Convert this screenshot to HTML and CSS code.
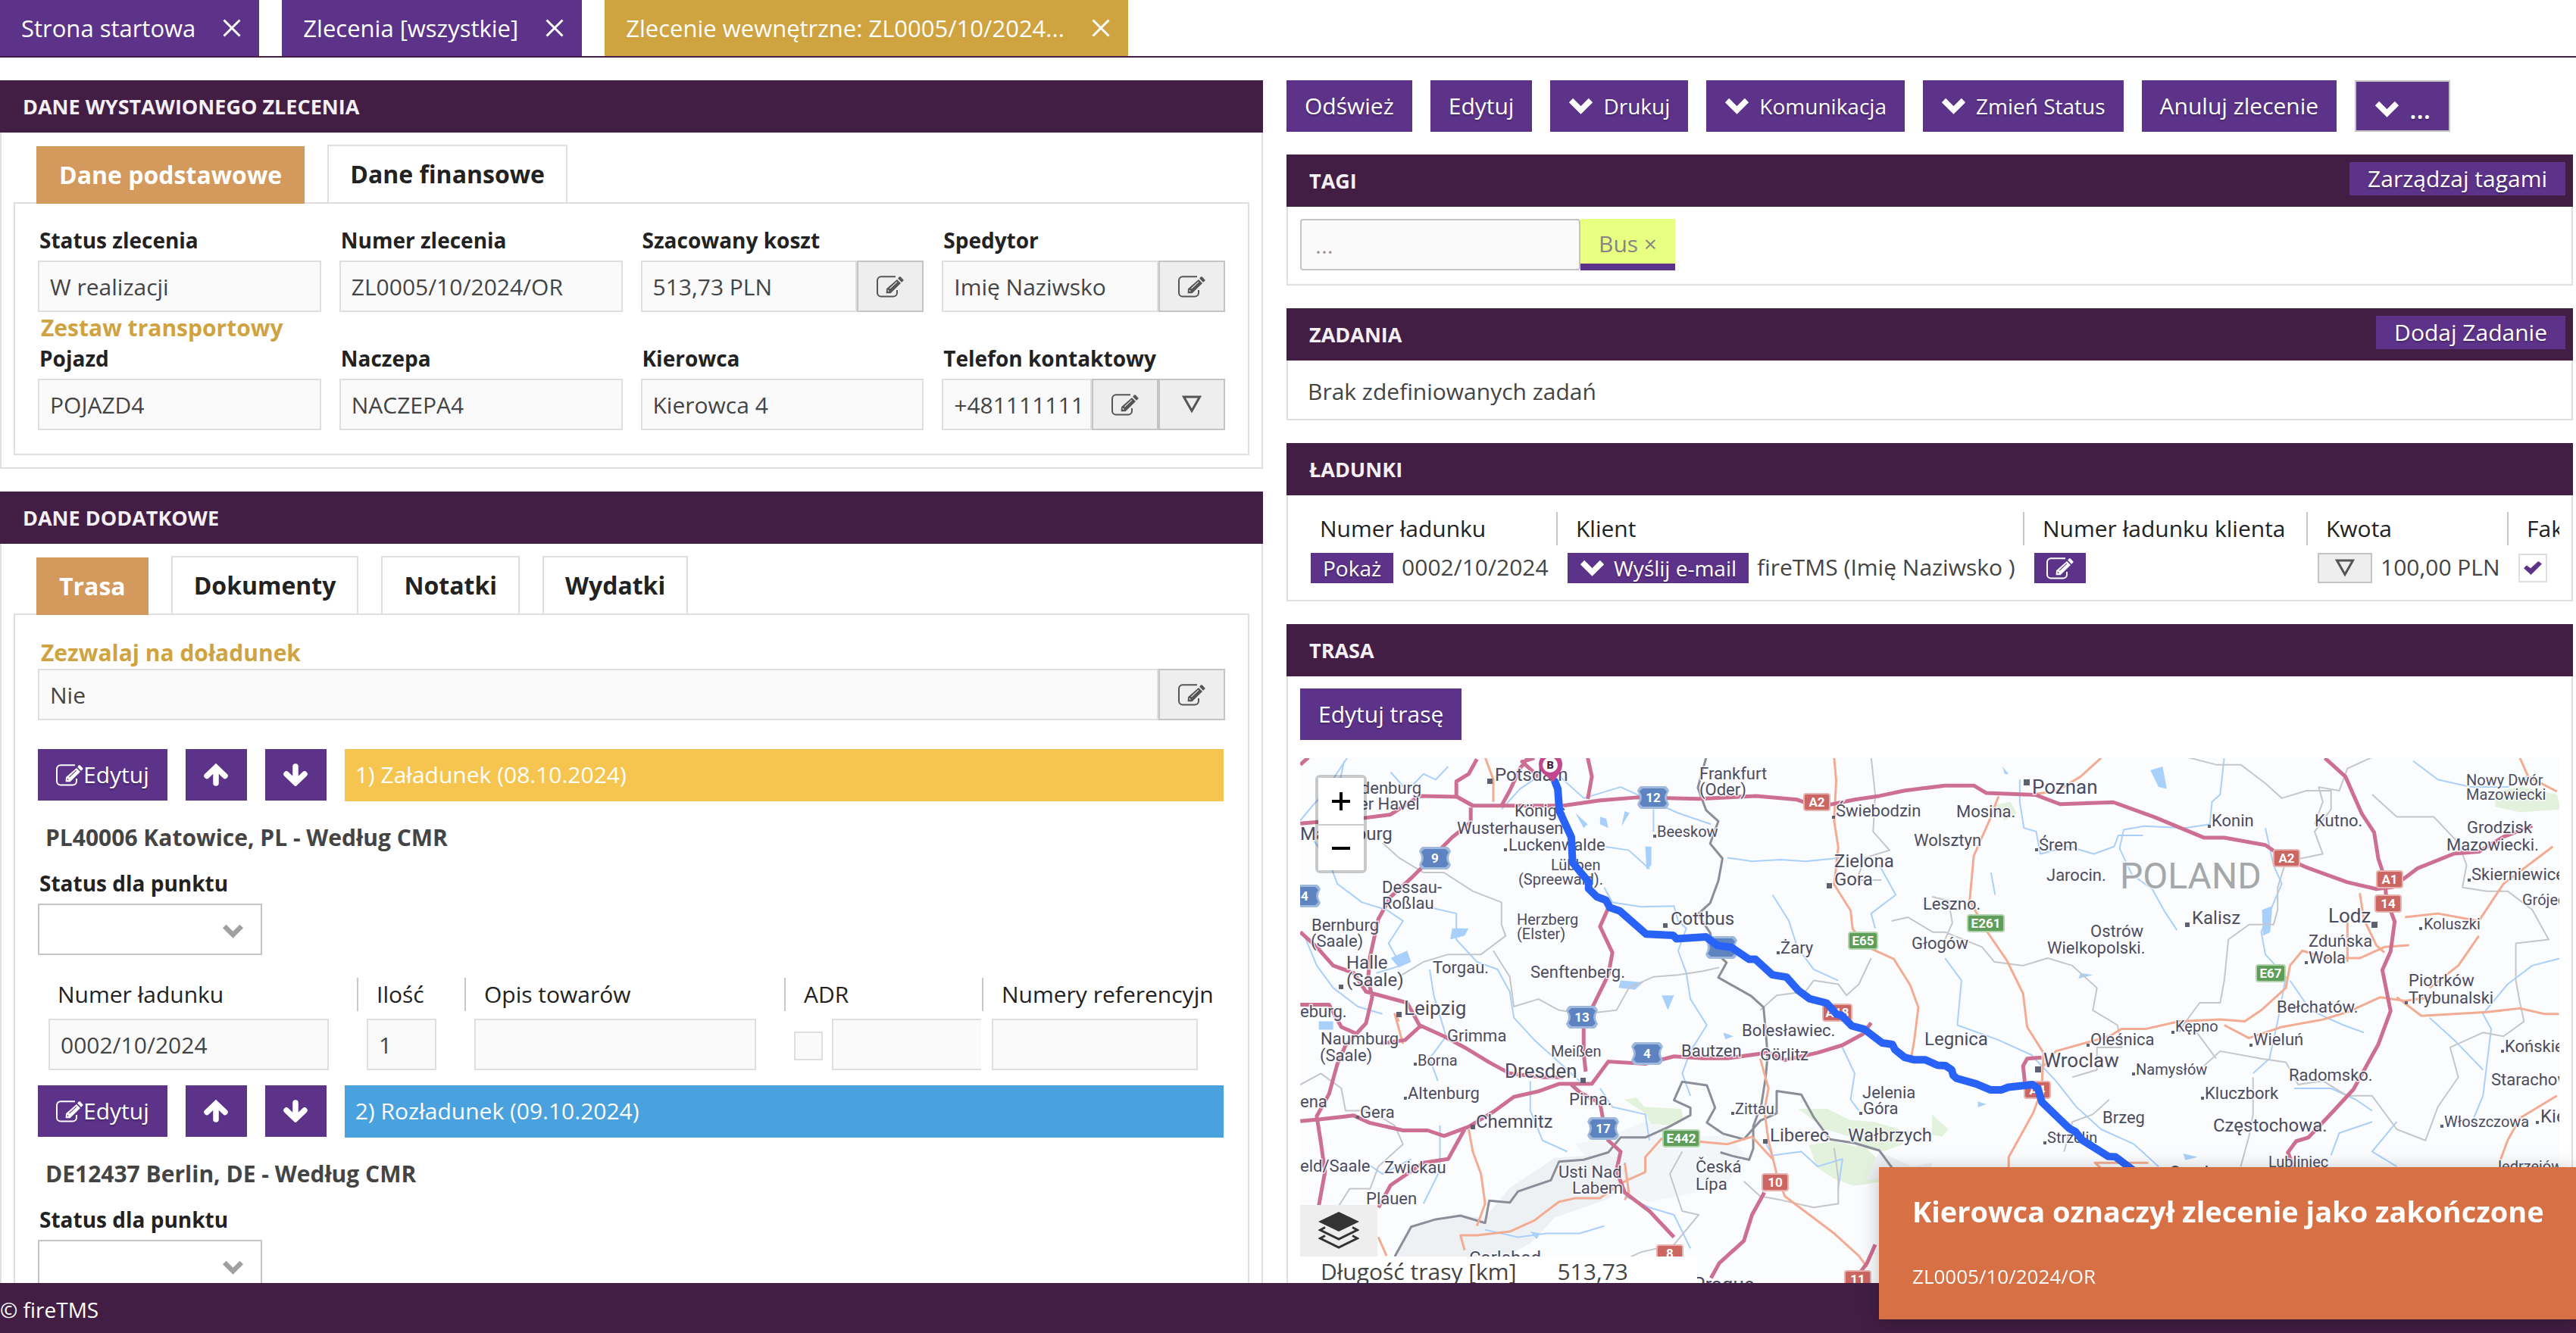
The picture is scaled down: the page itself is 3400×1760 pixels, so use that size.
FILE: index.html
```html
<!DOCTYPE html>
<html lang="pl">
<head>
<meta charset="utf-8">
<meta name="viewport" content="width=device-width, initial-scale=1">
<title>fireTMS</title>
<link rel="stylesheet" href="styles.css">
</head>
<body>
<svg class="sprite" aria-hidden="true">
  <symbol id="i-edit" viewBox="0 0 36 29">
    <path d="M25 1.2H6a5 5 0 0 0-5 5v16.3a5 5 0 0 0 5 5h16a5 5 0 0 0 5-5V19" fill="none" stroke="currentColor" stroke-width="2"/>
    <path fill-rule="evenodd" d="M12.6 23.3l.4-6L27 5l5 4.900-13.500 13.400zM14.600 18.400l1.500 1 .4 1.600-1.600-.3zM17 16.800l9.500-9 .7.700-9.500 9z" fill="currentColor"/>
    <path d="M28.200 3.800l1.600-2.200q1-.9 2 0l3.400 3.600q.7 1-.2 1.900l-2 1.600z" fill="currentColor"/>
  </symbol>
  <symbol id="i-chevron" viewBox="0 0 33 22"><path d="M3.500 3.500l13 13 13-13" fill="none" stroke="currentColor" stroke-width="7.500"/></symbol>
  <symbol id="i-up" viewBox="0 0 32 30"><path d="M16 26V6M4 16.500L16 5l12 11.500" fill="none" stroke="currentColor" stroke-width="7.500" stroke-linecap="round"/></symbol>
  <symbol id="i-down" viewBox="0 0 32 30"><path d="M16 4v20M4 14l12 11.500L28 14" fill="none" stroke="currentColor" stroke-width="7.500" stroke-linecap="round"/></symbol>
  <symbol id="i-tri" viewBox="0 0 26 24"><path d="M2.500 2h21L13 20.500z" fill="none" stroke="currentColor" stroke-width="3"/></symbol>
  <symbol id="i-close" viewBox="0 0 24 24"><path d="M1.500 1.500l21 21M22.500 1.500l-21 21" fill="none" stroke="currentColor" stroke-width="3"/></symbol>
  <symbol id="s-blue" viewBox="0 0 44 32"><path d="M6 1h32q3 1 5 6-3 5-3 9t3 9q-2 5-5 6H6q-3-1-5-6 3-5 3-9T1 7q2-5 5-6z" fill="#9fb9dc"/><path d="M8 4h28l4 4q-3 4-3 8t3 8l-4 4H8l-4-4q3-4 3-8T4 8z" fill="#5d84c0"/></symbol>
</svg>

<nav class="apptabs">
  <a class="apptab" href="#start">Strona startowa <svg><use href="#i-close"/></svg></a>
  <a class="apptab" href="#zlecenia">Zlecenia [wszystkie] <svg><use href="#i-close"/></svg></a>
  <a class="apptab is-active" href="#zlecenie">Zlecenie wewnętrzne: ZL0005/10/2024... <svg><use href="#i-close"/></svg></a>
</nav>

<main class="columns">
  <div class="col">
    <section class="panel">
      <header class="panel-head"><h2>DANE WYSTAWIONEGO ZLECENIA</h2></header>
      <div class="panel-body">
        <div class="tabs">
          <button class="tab is-active">Dane podstawowe</button>
          <button class="tab">Dane finansowe</button>
        </div>
        <div class="tabpane">
          <div class="grid4">
            <div class="fld"><label for="f1">Status zlecenia</label><div class="group"><input id="f1" value="W realizacji"></div></div>
            <div class="fld"><label for="f2">Numer zlecenia</label><div class="group"><input id="f2" value="ZL0005/10/2024/OR"></div></div>
            <div class="fld"><label for="f3">Szacowany koszt</label><div class="group"><input id="f3" value="513,73 PLN"><button class="addon" aria-label="Edytuj"><svg class="edit"><use href="#i-edit"/></svg></button></div></div>
            <div class="fld"><label for="f4">Spedytor</label><div class="group"><input id="f4" value="Imię Naziwsko"><button class="addon" aria-label="Edytuj"><svg class="edit"><use href="#i-edit"/></svg></button></div></div>
          </div>
          <h3 class="subhead">Zestaw transportowy</h3>
          <div class="grid4">
            <div class="fld"><label for="f5">Pojazd</label><div class="group"><input id="f5" value="POJAZD4"></div></div>
            <div class="fld"><label for="f6">Naczepa</label><div class="group"><input id="f6" value="NACZEPA4"></div></div>
            <div class="fld"><label for="f7">Kierowca</label><div class="group"><input id="f7" value="Kierowca 4"></div></div>
            <div class="fld"><label for="f8">Telefon kontaktowy</label><div class="group"><input id="f8" value="+481111111"><button class="addon" aria-label="Edytuj"><svg class="edit"><use href="#i-edit"/></svg></button><button class="addon" aria-label="Więcej"><svg class="tri"><use href="#i-tri"/></svg></button></div></div>
          </div>
        </div>
      </div>
    </section>

    <section class="panel">
      <header class="panel-head"><h2>DANE DODATKOWE</h2></header>
      <div class="panel-body">
        <div class="tabs">
          <button class="tab is-active">Trasa</button>
          <button class="tab">Dokumenty</button>
          <button class="tab">Notatki</button>
          <button class="tab">Wydatki</button>
        </div>
        <div class="tabpane">
          <label class="subhead" for="f9">Zezwalaj na doładunek</label>
          <div class="group"><input id="f9" value="Nie"><button class="addon" aria-label="Edytuj"><svg class="edit"><use href="#i-edit"/></svg></button></div>

          <article class="stop first">
            <div class="stop-bar">
              <button class="btn iconbtn"><svg class="edit"><use href="#i-edit"/></svg>Edytuj</button>
              <button class="btn arrow" aria-label="W górę"><svg><use href="#i-up"/></svg></button>
              <button class="btn arrow" aria-label="W dół"><svg><use href="#i-down"/></svg></button>
              <div class="stop-title load">1) Załadunek (08.10.2024)</div>
            </div>
            <h4>PL40006 Katowice, PL - Według CMR</h4>
            <div class="fld"><label for="s1">Status dla punktu</label>
              <div class="select"><select id="s1"><option></option></select><svg><use href="#i-chevron"/></svg></div></div>
            <table class="cargo">
              <colgroup><col class="c1"><col class="c2"><col class="c3"><col class="c4"><col></colgroup>
              <thead><tr><th>Numer ładunku</th><th>Ilość</th><th>Opis towarów</th><th>ADR</th><th>Numery referencyjn</th></tr></thead>
              <tbody><tr>
                <td><input aria-label="Numer ładunku" value="0002/10/2024"></td>
                <td><input aria-label="Ilość" value="1"></td>
                <td><input aria-label="Opis towarów"></td>
                <td class="adr"><div><input type="checkbox" aria-label="ADR"><input aria-label="Opis ADR"></div></td>
                <td class="last"><input aria-label="Numery referencyjne"></td>
              </tr></tbody>
            </table>
          </article>

          <article class="stop">
            <div class="stop-bar">
              <button class="btn iconbtn"><svg class="edit"><use href="#i-edit"/></svg>Edytuj</button>
              <button class="btn arrow" aria-label="W górę"><svg><use href="#i-up"/></svg></button>
              <button class="btn arrow" aria-label="W dół"><svg><use href="#i-down"/></svg></button>
              <div class="stop-title unload">2) Rozładunek (09.10.2024)</div>
            </div>
            <h4>DE12437 Berlin, DE - Według CMR</h4>
            <div class="fld"><label for="s2">Status dla punktu</label>
              <div class="select"><select id="s2"><option></option></select><svg><use href="#i-chevron"/></svg></div></div>
          </article>
        </div>
      </div>
    </section>
  </div>

  <div class="col right">
    <div class="toolbar">
      <button class="btn">Odśwież</button>
      <button class="btn">Edytuj</button>
      <button class="btn menu"><svg><use href="#i-chevron"/></svg>Drukuj</button>
      <button class="btn menu"><svg><use href="#i-chevron"/></svg>Komunikacja</button>
      <button class="btn menu"><svg><use href="#i-chevron"/></svg>Zmień Status</button>
      <button class="btn">Anuluj zlecenie</button>
      <button class="btn menu more"><svg><use href="#i-chevron"/></svg>...</button>
    </div>

    <section class="panel">
      <header class="panel-head"><h2>TAGI</h2><button class="btn headbtn">Zarządzaj tagami</button></header>
      <div class="panel-body">
        <div class="tags"><input class="taginput" aria-label="Tag" placeholder="..."><button class="tag">Bus ×</button></div>
      </div>
    </section>

    <section class="panel">
      <header class="panel-head"><h2>ZADANIA</h2><button class="btn headbtn">Dodaj Zadanie</button></header>
      <div class="panel-body"><p class="empty">Brak zdefiniowanych zadań</p></div>
    </section>

    <section class="panel">
      <header class="panel-head"><h2>ŁADUNKI</h2></header>
      <div class="panel-body">
        <table class="cargo loads">
          <colgroup><col class="l1"><col class="l2"><col class="l3"><col class="l4"><col></colgroup>
          <thead><tr><th>Numer ładunku</th><th>Klient</th><th>Numer ładunku klienta</th><th>Kwota</th><th>Faktura</th></tr></thead>
          <tbody><tr>
            <td><div class="cell"><button class="btn mini">Pokaż</button>0002/10/2024</div></td>
            <td><div class="cell"><button class="btn mini"><svg class="chev"><use href="#i-chevron"/></svg>Wyślij e-mail</button>fireTMS (Imię Naziwsko )</div></td>
            <td><div class="cell"><button class="btn mini" aria-label="Edytuj"><svg class="edit"><use href="#i-edit"/></svg></button></div></td>
            <td><div class="cell"><button class="btn mini grey" aria-label="Więcej"><svg class="tri"><use href="#i-tri"/></svg></button>100,00 PLN</div></td>
            <td><div class="cell chk"><input type="checkbox" aria-label="Faktura" checked></div></td>
          </tr></tbody>
        </table>
      </div>
    </section>

    <section class="panel route">
      <header class="panel-head"><h2>TRASA</h2></header>
      <div class="panel-body">
        <button class="btn">Edytuj trasę</button>
        <div class="map">
          <svg class="canvas" viewBox="0 0 1662 695" preserveAspectRatio="xMinYMin slice" role="img" aria-label="Mapa trasy">
            <rect width="1662" height="695" fill="#fbfcfe"/>
            <g class="geo" transform="matrix(.542 0 0 .4912 -16 -11)">
              <g fill="#e3f2dc">
                <path d="M1243 965l70 0 55 30 60 5 60 20 10 40-50 20-60-10-20-30-60-20zM1268 1062l60-10 80 20 30 30 30 20-30 40-60 10-50-20-40-30z"/>
                <path d="M818 940l30-5 20 25 90 5 5 30-30 15-50-5-15-30zM2940 112l60-12 90 20 10 40-100 8-60-15zM1568 980l40 40-15 20-25-5zM1710 150l50-10 15 30-30 20z"/>
              </g>
              <g fill="#eef1f3">
                <path d="M260 1362l40-80 120-30 60 5 60-80 110-80 130-10 60 60-60 60-130 50-60 70-60 35zM1440 1080l80 40 48-10 0 40-160 5z"/>
                <path d="M700 1060l80-20 90-40 140 40 60-5 50 60-60 80-180 40-100-40z" opacity=".6"/>
              </g>
              <g class="water">
                <path d="M30 190l30-40 25-30 60-100M125 90l12-60M250 60l40 50 40-45 30 15 30-35M520 160l45-55 60-45M60 240l40 60 20 60 60 50 60 20 40 30-35 60 30 60-60 20M330 420l80 20 0 70 50 60 50 20 30 60 10 70 50 60 60 60 50 50M345 590l10 70 30 110-40 60 20 60M40 500l30 80 40 60 60 50 60 20"/>
                <path d="M660 70l60 60 90-30 60 30 80 40 80 30M770 260l60 10 50 50M770 370l20 40 70 12 80-2 10 40 20 20-20 60 20 60 10 70 40 70-40 70-20 60 20 60M890 160l0 60M1070 290l60 10 70-5 60 5 90-10M1180 390l40 70 20 70 40 60 60 30M1440 310l40 80-60 50 10 40M760 910l30 50 80 20 10 70M300 1100l-70 40-40-30M590 890l0 80 30 80 60 30M370 1010l0 120-40 90M480 1290l80 20 70-10 80 0 60-20M820 1200l60 30 60 20 40 90M1350 800l30 70-10 70 20 30M1160 1050l20 40 70-10 40 40 60-20-10 80"/>
                <path d="M1782 80l0 60 10 70 30 10 10 60 70-20 60 20 50-20 10-30 60 0M2280 20l-10 100-20 20-5 60-60 10-100-5-50 10-10 50 30 70 50 40 30 60 30 50M2380 210l20 100 20 50-50 130 10 60 50 60-20 120-20 100-40 40M2740 30l60 50 80 20 90 0 50-30M3100 560l-70 20-60 50-60 80 20 40-10 90-10 90-30 80M1600 560l40 60-10 120 100 40 80 40 60 70 50 70 60 60 80 40 60 60M2440 620l50 80 80 40 50 20M2450 910l90 0 60 30 40 30M2640 1000l-80 30-20 60M2780 720l60 60 70 80M2700 1120l-60-40 60-80M1712 330l10 60"/>
              </g>
              <g fill="#a9d0fb">
                <path d="M700 170l30 30-10 10zM760 180l15 5 5 25-20-10zM820 165l12 5-20 35zM870 260l15 0 0 50-12 12zM250 560l40-20 10 30-30 15zM75 730l35 0 0 22-35 0zM400 480l40 0-10 20-35 10zM810 620l55 5-20 20-40-5zM910 660l30 0-15 40zM2372 430l25-10-5 70-18 10zM2100 55l30-10 10 60-20-5zM1930 600l30 5-35 10zM2180 1085l35 10-30 8zM1680 945l20 8-20 8zM1060 760l25 10-20 8zM590 1295l25 5-10 15zM1740 45l15 20-10 0z"/>
              </g>
              <g class="admin">
                <path d="M230 250l40 40 60 40 50 0 70 50 70 30 0 60 10 30-60 50-80 0-60 20-60 40M500 540l40 70 10 80 60-20 50 30 60 10 80-10 30-60 60-30 60-5 60-10 40-10M30 900l50-30 50 40 10 60 60 0 60 40 20 50-60 60-20 60-50 0-40 70M1150 700l40-40 70-10 20-30 60 10 20 30 30-30 30-70M1420 20l10 100-5 100 40 50-60 20-20 60 60 0M1470 460l40-10 60 40 30 0 90 40 30 40 70 10 60-20 60 20 60 60-10 60 60 40 10 60-60 0 0 60-60 20M1568 395l40 10 10 60-20 50M2190 20l70 20 60 0 60 50 40 40 60-20 60 0 0 50-40 60 20 60-90 20-20 70 0 60-10 40-60 0-50 40-10 110-10 60-50 0-40 60-10 20M2500 200l20-60-10-40 50 10 20-60 60-30M2640 120l60 60 90 0 60 70 20 60-10 60 60 10 50 0 60 50 40 80-80 10 0 100 10 60 10 50-50 40-50-10-80 40 20 80-50 80-30 90-70-30-60-90-60 0-60-40-60 10-30-60-60-10-100-20-40 40M2200 740l40 60 20 30M960 1080l-30 60 30 100 40 10-60 80-80 20-60 30M1110 1160l40 40 50 10 80 20 60-10 0-70-10-80M2000 940l-40 40-50 20-20 80M2350 880l0 100-10 60-20 80"/>
              </g>
              <g class="border">
                <path d="M1018 22l-20 80 20 60 30 30-20 60 30 40-10 60-20 60-30 30 30 50 10 50 30 30-20 40 80 50 30 30 5 60 5 70-5 60-10 70-20 60 0 60-10 30-40-10-30-10M260 1362l40-80 60-20 60-10 60 20 10-60 50 5 20-30 80-30 20-50 60-5 60-20 30-40 60 0 60-30 50-30 0-20-40-20 20-50 60 10 20 60-20 40 40 30 50 15 40-50 40-20 0-60 60 10 30 60 40 60 60 10 60 20 40 60 40-10"/>
              </g>
              <g class="minor">
                <path d="M1330 22l5 60-5 110 10 70-10 100 40 70 5 50 40 50 60 30 40 70 20 60-10 90-10 60M1150 830l20 80-10 60 10 80 20 90 20 60 60 50 60 50 60 60 20 30M1180 1100l-50-60-60 20-100-10-60-5-40 50 0 40-60 30-50 40-60 0-40 10-60 50-60 30-80 10-40 0 10 40M480 20l20 60 0 60M440 1020l10 60 20 60 10 80-20 60M270 730l-10-20 20 80M220 1310l20 50M820 1110l10 80-10 20"/>
                <path d="M1980 22l-50 50-60 40-80 10M1730 125l-20 60-40 100-10 120 40 80 50 80 40 90 10 90 40 70-5 100 -20 60-60 120 0 110M1840 850l30-40 130-40 30-20 60 0 80-20 100-5 60 5 40-30 60-60 10-60 30-40 60 20 80 0 60-30 60-5M2280 740l60 35 80-30 100-20 60-20 80-40 60 10 60-10M2700 665l60 50 80-5 80-5 80-10 60 15 35 0M2610 385l10 70 30 70 20 20M2720 450l80-10 100 20 60-100 120-100M2780 640l70-60 50-80M3000 22l20 50 70 40M2580 450l0 120M2950 1110l20-60 30-60 90-60M1985 1130l-20-20 130 0"/>
              </g>
              <g class="major">
                <path d="M30 198l150-14 70-10 70-50 90 2 40 24 60 0 160 0 90-14 90-8 150 4 140-8 100 10 50 20 90-20 60-10 60-14 100-14 70 0 30 20 120 5 60 25 130-5 100 40 120 55 50 0 100 20 40 30 60 30 100 40 70 18 40-5 60-50 90-40 60-5 60-40 70-30"/>
                <path d="M450 150l-40-25 0-40 30-20 20-40M520 150l20-40 25-60 20-30M730 22l10 50-10 60M600 22l-30 10 40 40M445 155l0 40-45 40-100 110-50 50-30 60-20 100-5 60 10 50-15 70-50 60-20 50-20 80-30 60 10 70 10 80-20 120 0 50M30 490l40 40 40 50 50 20 30 50 100 30 30 60 60 30 50 30 60 40 50 30 80 10 50 0M30 998l50-5 80-10 40 20 80 20 60 0 40 15 60-25 60-40 50-40 60-15 50-20 80 0 40-60 90 6 70-20 70 5 60 0 100-15 40 20 80-20 60-20 50-30 20-30M780 425l-20 50 30 70-10 60-40 90-20 50 0 70 5 50M690 900l20 20 50 30 10 60 10 40 30 30-10 50 20 60 60 50 60 70M1160 1190l-30 60-20 70-60 60-20 40M1430 1330l-20 50-20 30M325 740l-40 40-60 10M30 685l70 0 30 60 40 20M430 1020l-40 80-60 10-80 60-30 60M30 40l20-20"/>
                <path d="M2525 22l50 50 40 100 30 50 10 70 15 50 5 60 20 60-10 80-20 50 20 110-30 90-60 120-50 60-60 70-30 10-20 30 20 60M1795 900l-5-50 10-20 35-3"/>
              </g>
            </g>

            <g class="shields">
              <use href="#s-blue" x="156" y="116" width="44" height="32"/><use href="#s-blue" x="444" y="36" width="44" height="32"/>
              <use href="#s-blue" x="-16" y="166" width="44" height="32"/><use href="#s-blue" x="350" y="326" width="44" height="32"/>
              <use href="#s-blue" x="436" y="374" width="44" height="32"/><use href="#s-blue" x="378" y="473" width="44" height="32"/>
              <use href="#s-blue" x="534" y="234" width="44" height="32"/>
              <g class="red"><rect x="665" y="47" width="34" height="22" rx="3"/><rect x="610" y="549" width="34" height="22" rx="3"/><rect x="471" y="643" width="34" height="22" rx="3"/><rect x="719" y="677" width="34" height="22" rx="3"/><rect x="1285" y="121" width="34" height="22" rx="3"/><rect x="1421" y="149" width="34" height="22" rx="3"/><rect x="1419" y="181" width="34" height="22" rx="3"/><rect x="690" y="325" width="38" height="22" rx="3"/><rect x="956" y="427" width="34" height="22" rx="3"/></g>
              <g class="green"><rect x="724" y="230" width="38" height="22" rx="3"/><rect x="479" y="491" width="48" height="22" rx="3"/><rect x="881" y="207" width="48" height="22" rx="3"/><rect x="1262" y="273" width="38" height="22" rx="3"/></g>
              <text x="178" y="138">9</text><text x="466" y="58">12</text><text x="6" y="188">4</text><text x="372" y="348">13</text><text x="458" y="396">4</text><text x="400" y="495">17</text>
              <text x="682" y="64">A2</text><text x="627" y="566">10</text><text x="488" y="660">8</text><text x="736" y="694">11</text><text x="1302" y="138">A2</text><text x="1438" y="166">A1</text><text x="1436" y="198">14</text>
              <text x="743" y="247">E65</text><text x="503" y="508">E442</text><text x="905" y="224">E261</text><text x="1281" y="290">E67</text>
              <text x="709" y="342">A18</text><text x="973" y="444">A4</text>
            </g>

            <g class="dots">
              <path d="M247 27h7v7h-7zM695 165h7v7h-7zM479 218h6v6h-6zM127 335h7v7h-7zM370 422h7v7h-7zM51 299h6v6h-6zM225 484h6v6h-6zM611 503h6v6h-6zM955 28h8v8h-8zM1414 216h8v8h-8zM1168 217h6v6h-6zM970 407h8v8h-8z"/>
              <path d="M269 119h4v4h-4zM466 101h4v4h-4zM702 76h4v4h-4zM629 255h4v4h-4zM150 402h4v4h-4zM137 447h4v4h-4zM74 472h4v4h-4zM970 119h4v4h-4zM1198 88h4v4h-4zM1477 223h4v4h-4zM1326 268h4v4h-4zM1458 321h4v4h-4zM1150 360h4v4h-4zM1253 377h4v4h-4zM1038 377h4v4h-4zM1098 415h4v4h-4zM1189 447h4v4h-4zM1585 385h4v4h-4zM1541 159h4v4h-4zM1505 484h4v4h-4zM1631 479h4v4h-4zM981 506h4v4h-4zM738 467h4v4h-4zM569 467h4v4h-4z"/>
            </g>

            <g class="names">
              <text x="257" y="30" class="m">Potsdam</text><text x="35" y="47">Brandenburg</text><text x="36" y="68">an der Havel</text><text x="0" y="108" class="m">Magdeburg</text>
              <text x="283" y="77">Königs</text><text x="207" y="100">Wusterhausen</text><text x="471" y="104" class="s">Beeskow</text><text x="275" y="122">Luckenwalde</text>
              <text x="331" y="148" class="s">Lübben</text><text x="288" y="167" class="s">(Spreewald).</text><text x="527" y="28">Frankfurt</text><text x="527" y="49">(Oder)</text>
              <text x="707" y="77">Świebodzin</text><text x="705" y="144" class="m">Zielona</text><text x="705" y="168" class="m">Gora</text><text x="108" y="178">Dessau-</text><text x="108" y="199">Roßlau</text>
              <text x="15" y="228">Bernburg</text><text x="14" y="249">(Saale)</text><text x="61" y="278" class="m">Halle</text><text x="61" y="301" class="m">(Saale)</text>
              <text x="286" y="220" class="s">Herzberg</text><text x="286" y="239" class="s">(Elster)</text><text x="489" y="220" class="m">Cottbus</text><text x="175" y="284">Torgau.</text><text x="304" y="290">Senftenberg.</text>
              <text x="634" y="258">Żary</text><text x="137" y="339" class="l">Leipzig</text><text x="0" y="342">eburg.</text><text x="194" y="374">Grimma</text><text x="27" y="378">Naumburg</text><text x="26" y="400">(Saale)</text>
              <text x="155" y="406" class="s">Borna</text><text x="331" y="394" class="s">Meißen</text><text x="503" y="394">Bautzen</text><text x="270" y="422" class="l">Dresden</text><text x="583" y="367">Bolesławiec.</text><text x="607" y="399">Görlitz</text>
              <text x="142" y="450">Altenburg</text><text x="355" y="458">Pirna.</text><text x="0" y="461">ena</text><text x="79" y="475">Gera</text><text x="232" y="488" class="m">Chemnitz</text><text x="574" y="470" class="s">Zittau</text>
              <text x="620" y="506" class="m">Liberec</text><text x="723" y="506" class="m">Wałbrzych</text><text x="742" y="449">Jelenia</text><text x="743" y="470">Góra</text><text x="0" y="546">eld/Saale</text><text x="111" y="548">Zwickau</text>
              <text x="341" y="554">Usti Nad</text><text x="359" y="575">Labem</text><text x="522" y="547">Česká</text><text x="522" y="570">Lípa</text><text x="87" y="589">Plauen</text><text x="223" y="668" class="m">Carlsbad</text><text x="518" y="704" class="l">Prague</text>
              <text x="966" y="47" class="l">Poznan</text><text x="866" y="78">Mosina.</text><text x="810" y="116">Wolsztyn</text><text x="975" y="122">Śrem</text><text x="985" y="162">Jarocin.</text><text x="1082" y="172" class="country">POLAND</text>
              <text x="1203" y="90">Konin</text><text x="1339" y="90">Kutno.</text><text x="1539" y="36" class="s">Nowy Dwór</text><text x="1539" y="55" class="s">Mazowiecki</text><text x="1540" y="99">Grodzisk</text><text x="1513" y="122">Mazowiecki.</text>
              <text x="1546" y="161">Skierniewice</text><text x="1357" y="217" class="l">Lodz</text><text x="1483" y="226" class="s">Koluszki</text><text x="1613" y="194" class="s">Grójec</text><text x="1177" y="219" class="m">Kalisz</text><text x="822" y="200">Leszno.</text>
              <text x="1043" y="236">Ostrów</text><text x="986" y="258">Wielkopolski.</text><text x="807" y="252">Głogów</text><text x="1331" y="249">Zduńska</text><text x="1331" y="271">Wola</text><text x="1463" y="301">Piotrków</text><text x="1463" y="324">Trybunalski</text>
              <text x="1289" y="336">Bełchatów.</text><text x="1155" y="361" class="s">Kępno</text><text x="1258" y="379">Wieluń</text><text x="824" y="379" class="m">Legnica</text><text x="1043" y="379">Oleśnica</text><text x="981" y="408" class="l">Wroclaw</text>
              <text x="1103" y="418" class="s">Namysłów</text><text x="1305" y="426">Radomsko.</text><text x="1194" y="450">Kluczbork</text><text x="1590" y="388">Końskie</text><text x="1572" y="432">Starachowice</text><text x="1059" y="482">Brzeg</text>
              <text x="1205" y="493" class="m">Częstochowa.</text><text x="1510" y="487" class="s">Włoszczowa</text><text x="1637" y="481" class="m">Kielce</text><text x="986" y="508" class="s">Strzelin</text><text x="1278" y="540" class="s">Lubliniec</text><text x="1146" y="557" class="l">Opole</text><text x="1575" y="546" class="s">Jędrzejów</text>
            </g>

            <g class="geo" transform="matrix(.542 0 0 .4912 -16 -11)">
              <path class="track" d="M650 85l7 20 4 60 29 70 3 68 39 52v18l20 22 22 9 10 20 24 9 64 62 66 4 8 9 72-5 28 23 34 5 43 32h15l42 42 34 6 29 36 27 22 42 12 24 30 12 3 25 28 30 9 44 37 25 4 6 14 24 21 22 6h27l31 15 19 1 15 11 4 15 8 8 48 15 34 16h28l16-7 59-7 13 10 10 37 66 70 16 10 16 22 64 44 17 1 43 36"/>
            </g>
            <g class="pin"><path d="M334 32C328 24 315 20 315 8a15 15 0 0 1 31 0c0 11-7 15-12 24z"/><circle cx="330" cy="9" r="10"/><text x="330" y="14">B</text></g>
          </svg>
          <div class="zoomctl"><button aria-label="Przybliż"><svg viewBox="0 0 24 24"><path d="M12 0v24M0 12h24"/></svg></button><button aria-label="Oddal"><svg viewBox="0 0 24 24"><path d="M0 12h24"/></svg></button></div>
          <div class="mapfoot">
            <button class="layers" aria-label="Warstwy"><svg viewBox="0 0 54 50"><path d="M27 0l27 13-27 13L0 13z" fill="#333"/><path d="M9 20.500L2.500 24 27 36l24.500-12L45 20.500M9 31.500L2.500 35 27 47l24.500-12L45 31.500" fill="none" stroke="#333" stroke-width="3"/></svg></button>
            <div class="length"><span>Długość trasy [km]</span><span>513,73</span></div>
          </div>
        </div>
      </div>
    </section>
  </div>
</main>

<footer class="foot">© fireTMS</footer>

<aside class="toast" role="status">
  <h2>Kierowca oznaczył zlecenie jako zakończone</h2>
  <p>ZL0005/10/2024/OR</p>
</aside>
</body>
</html>
```
FILE: styles.css
```css
* { box-sizing: border-box; }
body {
  margin: 0;
  height: 100vh;
  display: flex;
  flex-direction: column;
  overflow: hidden;
  background: #fff;
  color: #444;
  font: 30px/42px "Open Sans", "Noto Sans", sans-serif;
}
h2, h3, h4, p { margin: 0; }
button, input, select { font: inherit; color: inherit; border-radius: 0; margin: 0; }
button { border: 0; padding: 0; cursor: pointer; }
svg { display: block; flex: none; }
.sprite { position: absolute; width: 0; height: 0; }

.apptabs { display: flex; gap: 30px; height: 76px; flex: none; border-bottom: 2px solid #421e44; }
.apptab {
  display: flex; align-items: center; gap: 36px;
  padding: 0 24px 0 28px;
  background: #5c3388; color: #fff; text-decoration: none; white-space: nowrap;
  font-size: 31px;
}
.apptab.is-active { background: #d0a341; font-weight: 500; }
.apptab svg { width: 24px; height: 24px; }

.columns {
  flex: 1; min-height: 0;
  display: grid; grid-template-columns: minmax(0, 1667fr) minmax(0, 1698fr); gap: 31px;
  padding: 30px 4px 0 0;
  overflow: hidden;
}
.col { display: flex; flex-direction: column; gap: 30px; min-height: 0; }

.panel { flex: none; }
.panel-head { display: flex; justify-content: space-between; align-items: flex-start; background: #421e44; padding: 0 10px 0 30px; }
.panel-head h2 { font-size: 27px; line-height: 69px; font-weight: 700; color: #f5f0f5; }
.panel-body { border: 2px solid #e2dddf; border-top: 0; padding: 16px; }

.btn { background: #5c3388; color: #fff; height: 68px; padding: 0 24px; white-space: nowrap; text-shadow: 0 2px 2px rgba(0, 0, 0, .25); }
.headbtn { height: 44px; margin-top: 10px; line-height: 40px; }

.tabs { display: flex; gap: 30px; padding-left: 30px; position: relative; }
.tab { height: 76px; padding: 0 28px; border: 2px solid #e2dddf; border-bottom: 0; background: #fff; font-size: 32px; font-weight: 700; color: #222; }
.tab.is-active { margin: 2px 0 -2px; padding: 0 30px; border: 0; background: #d4995c; color: #fff; }
.tabpane { border: 2px solid #e2dddf; padding: 29px 30px 31px; }
.grid4 { display: grid; grid-template-columns: repeat(4, minmax(0, 1fr)); gap: 24px; }
.fld label { display: block; font-size: 28px; line-height: 38px; font-weight: 700; color: #222; padding-left: 2px; margin-bottom: 8px; }
.subhead { display: block; font-size: 30px; line-height: 42px; font-weight: 700; color: #d0a341; padding-left: 4px; }
.group { display: flex; height: 68px; }
.group input, .cargo td > input, .adr input { min-width: 0; width: 100%; height: 68px; flex: 1; border: 2px solid #e2dddf; background: #fafafa; padding: 0 14px; }
.addon { width: 88px; flex: none; display: grid; place-items: center; background: #eee; border: 2px solid #c4c4c4; color: #555; }
.edit { width: 36px; height: 29px; }
.tri { width: 26px; height: 24px; }

.stop { margin-top: 20px; }
.stop.first { margin-top: 38px; }
.stop-bar { display: flex; gap: 24px; padding-right: 2px; }
.iconbtn { display: flex; align-items: center; }
.arrow { width: 81px; display: grid; place-items: center; }
.arrow svg { width: 32px; height: 30px; }
.stop-title { flex: 1; height: 69px; line-height: 68px; margin-bottom: -1px; padding-left: 14px; color: #fff; }
.load { background: #f5c550; }
.unload { background: #49a1de; }
.stop h4 { font-size: 30px; line-height: 42px; font-weight: 700; color: #444; margin: 28px 0 20px; padding-left: 10px; }
.select { position: relative; width: 296px; }
.select select { appearance: none; width: 100%; height: 68px; background: #fff; border: 2px solid #c4c4c4; display: block; }
.select svg { position: absolute; right: 24px; top: 27px; width: 29px; height: 19px; color: #a0a0a0; pointer-events: none; }

.cargo { table-layout: fixed; border-collapse: collapse; width: calc(100% - 20px); margin: 30px 16px 0 4px; }
.cargo th { height: 44px; padding: 0 0 0 24px; text-align: left; font-weight: 400; font-size: 30px; color: #222; white-space: nowrap; overflow: hidden; border-right: 2px solid #c8c8c8; }
.cargo th:first-child { padding-left: 22px; }
.cargo th:last-child { border-right: 0; }
.cargo td { padding: 10px 38px 0 10px; height: 78px; overflow: hidden; vertical-align: top; }
.cargo td + td { padding-left: 12px; }
.cargo td > input { display: block; }
.cargo td.last { padding-right: 20px; }
.cargo td.adr { padding-right: 2px; }
.adr div { display: flex; gap: 12px; align-items: center; overflow: hidden; }
.adr input { border-right: 0; }
.c1 { width: 418px; } .c2 { width: 142px; } .c3 { width: 422px; } .c4 { width: 261px; }
input[type="checkbox"], .adr input[type="checkbox"] { appearance: none; flex: none; width: 38px; height: 38px; border: 2px solid #e2dddf; background: #fafafa; padding: 0; display: grid; place-items: center; margin: 4px 0 0; }
input[type="checkbox"]:checked { background: #fff; color: #5c3388; }
input[type="checkbox"]:checked::before { content: ""; width: 24px; height: 18px; background: currentColor; clip-path: polygon(0 52%, 16% 30%, 38% 52%, 80% 0, 100% 20%, 40% 100%); }

.toolbar { display: flex; gap: 24px; flex: none; }
.menu { display: flex; align-items: center; gap: 13px; font-size: 28px; }
.menu svg { width: 33px; height: 22px; }
.more { border: 2px solid #c4c4c4; font-size: 34px; font-weight: 600; padding-top: 8px; }
.tags { display: flex; margin-bottom: 2px; }
.taginput { width: 370px; height: 68px; border: 2px solid #c4c4c4; border-radius: 4px; background: #fafafa; padding: 0 18px; }
.taginput::placeholder { color: #999; }
.tag { height: 68px; padding: 6px 24px 0; background: #e8ff82; color: #858585; border-bottom: 9px solid #5c3388; }
.empty { padding: 4px 10px 0; line-height: 41px; height: 45px; }

.loads { width: calc(100% - 4px); margin: 6px 0 6px 4px; }
.loads td { height: 50px; padding: 10px 0 0 10px; }
.loads td + td { padding: 10px 0 0 14px; }
.l1 { width: 335px; } .l2 { width: 616px; } .l3 { width: 374px; } .l4 { width: 265px; }
.cell { display: flex; gap: 11px; height: 40px; line-height: 38px; white-space: nowrap; }
.cell input { margin: 1px 0 0; }
.mini { height: 40px; padding: 0 16px; font-size: 28px; display: flex; align-items: center; gap: 12px; }
.mini .chev { width: 33px; height: 22px; }
.grey { background: #eee; border: 2px solid #c4c4c4; color: #555; padding: 0 21px; }

.route { flex: 1; min-height: 0; display: flex; flex-direction: column; }
.route .panel-body { flex: 1; min-height: 0; display: flex; flex-direction: column; align-items: flex-start; gap: 24px; padding-bottom: 0; border-bottom: 0; }
.map { position: relative; flex: 1; min-height: 0; width: 100%; overflow: hidden; }
.canvas { width: 100%; height: 100%; }
.geo path { fill: none; stroke-linejoin: round; vector-effect: non-scaling-stroke; }
.geo g[fill] path { fill: inherit; }
.water path { stroke: #a9d0fb; stroke-width: 2; }
.admin path { stroke: #c4c6ca; stroke-width: 2; }
.border path { stroke: #8b8d99; stroke-width: 3; }
.minor path { stroke: #f3ab92; stroke-width: 3; }
.major path { stroke: #cd6f90; stroke-width: 5; }
.geo .track { stroke: #2962f6; stroke-width: 10; stroke-linecap: round; }
.names text { font: 400 22px Roboto, sans-serif; fill: #4c4c60; paint-order: stroke; stroke: rgba(251, 252, 254, .8); stroke-width: 3px; }
.names .s { font-size: 20px; }
.names .m { font-size: 24px; }
.names .l { font-size: 26px; }
.names .country { font-size: 48px; fill: #a5a8ab; }
.dots path { fill: #5c6070; }
.shields text { font: 700 17px Roboto, sans-serif; fill: #fff; text-anchor: middle; }
.red rect { fill: #cb6663; stroke: #e7b3b0; stroke-width: 2; }
.green rect { fill: #5f9e58; stroke: #b4d3af; stroke-width: 2; }
.pin path { fill: #c2478e; }
.pin circle { fill: #fff; }
.pin text { font: 700 15px "Open Sans", sans-serif; fill: #421e44; text-anchor: middle; }
.zoomctl { position: absolute; left: 20px; top: 22px; border: 4px solid rgba(0, 0, 0, .2); border-radius: 6px; background-clip: padding-box; }
.zoomctl button { display: grid; place-items: center; width: 60px; height: 61px; background: #fff; }
.zoomctl button + button { border-top: 2px solid #ccc; }
.zoomctl svg { width: 24px; height: 24px; stroke: #000; stroke-width: 4; }
.mapfoot { position: absolute; left: 0; bottom: 0; }
.layers { display: grid; place-items: center; width: 102px; height: 68px; background: #eee; }
.layers svg { width: 54px; height: 50px; }
.length { display: flex; gap: 54px; width: 524px; height: 35px; padding-left: 27px; line-height: 40px; background: #fff; }

.foot { flex: none; height: 66px; line-height: 70px; background: #421e44; color: #fff; font-size: 28px; }
.toast { position: fixed; right: 0; bottom: 18px; width: 920px; padding: 28px 44px 36px; background: #d77145; color: #fff; box-shadow: 0 4px 24px rgba(0, 0, 0, .25); }
.toast h2 { font-size: 38px; line-height: 60px; font-weight: 700; white-space: nowrap; }
.toast p { margin-top: 36px; font-size: 26px; line-height: 41px; }
```
